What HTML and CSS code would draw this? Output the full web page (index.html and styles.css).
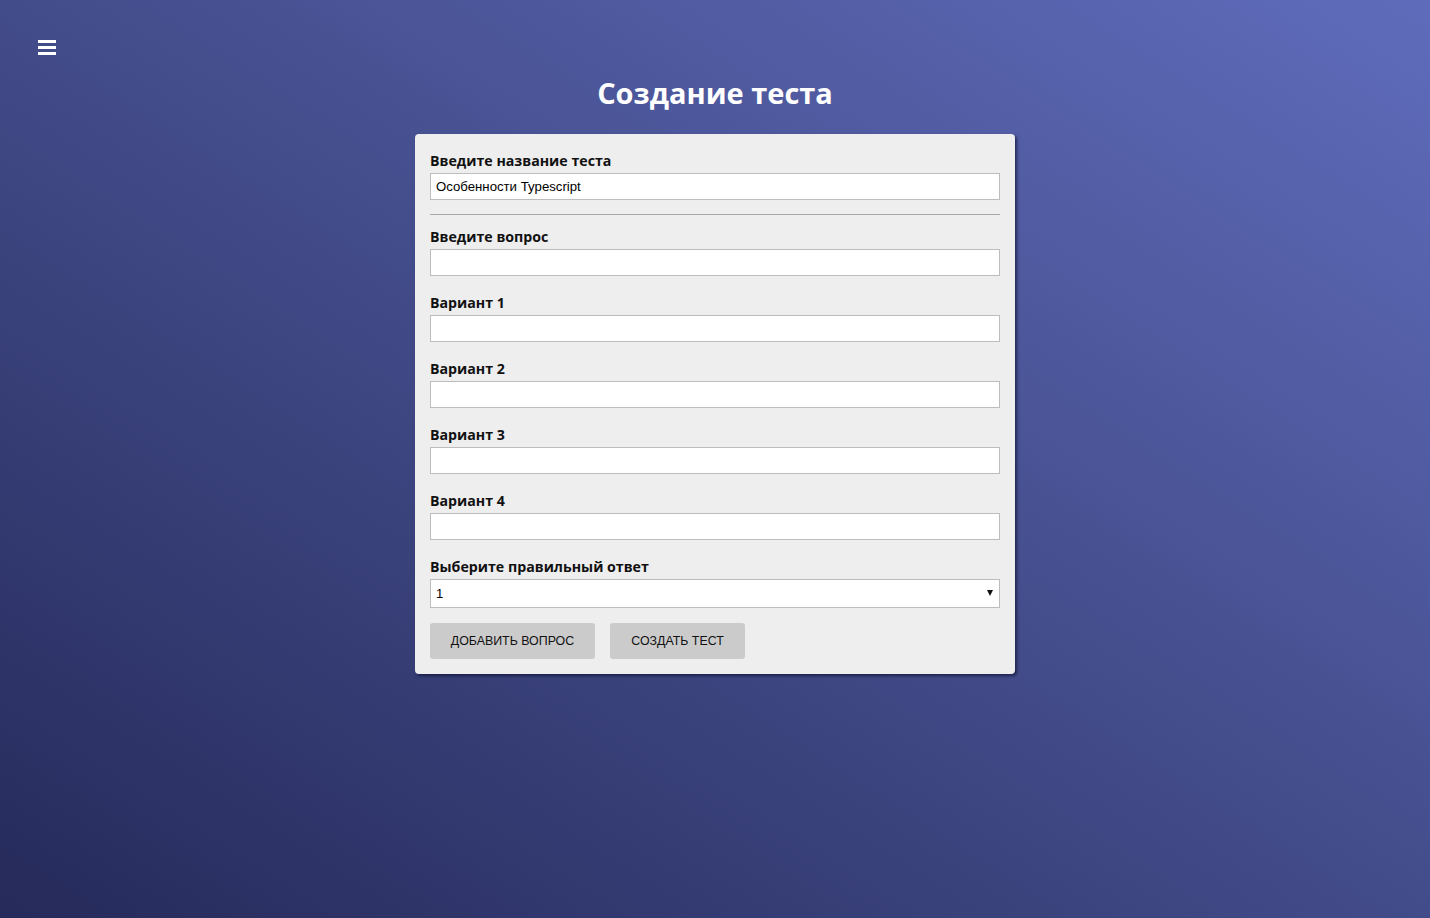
FILE: index.html
```html
<!DOCTYPE html>
<html lang="ru">
<head>
<meta charset="utf-8">
<title>Создание теста</title>
<link rel="stylesheet" href="styles.css">
</head>
<body>
<div class="page">
  <header class="topbar">
    <button class="menu-btn" aria-label="Меню">
      <svg width="18" height="15" viewBox="0 0 18 15"><rect x="0" y="0" width="18" height="3" fill="#fff"/><rect x="0" y="6" width="18" height="3" fill="#fff"/><rect x="0" y="12" width="18" height="3" fill="#fff"/></svg>
    </button>
  </header>
  <h1 class="title">Создание теста</h1>
  <form class="card">
    <div class="group group-first">
      <label class="label">Введите название теста</label>
      <input class="field" type="text" value="Особенности Typescript">
    </div>
    <hr class="divider">
    <div class="group">
      <label class="label">Введите вопрос</label>
      <input class="field" type="text">
    </div>
    <div class="group">
      <label class="label">Вариант 1</label>
      <input class="field" type="text">
    </div>
    <div class="group">
      <label class="label">Вариант 2</label>
      <input class="field" type="text">
    </div>
    <div class="group">
      <label class="label">Вариант 3</label>
      <input class="field" type="text">
    </div>
    <div class="group">
      <label class="label">Вариант 4</label>
      <input class="field" type="text">
    </div>
    <div class="group group-last">
      <label class="label">Выберите правильный ответ</label>
      <div class="select-wrap">
        <select class="select">
          <option>1</option>
          <option>2</option>
          <option>3</option>
          <option>4</option>
        </select>
        <span class="caret"></span>
      </div>
    </div>
    <div class="actions">
      <button type="button" class="btn btn-add">Добавить вопрос</button>
      <button type="button" class="btn btn-create">Создать тест</button>
    </div>
  </form>
</div>
</body>
</html>
```
FILE: styles.css
```css
* { box-sizing: border-box; }
html, body { margin: 0; padding: 0; }
body {
  min-height: 918px;
  background: linear-gradient(to top right, #252a5a 0%, #434c8a 50%, #5f6cbb 100%);
  font-family: "Open Sans", "Liberation Sans", sans-serif;
}
.page {
  min-height: 918px;
  display: flex;
  flex-direction: column;
  align-items: center;
}
.topbar {
  align-self: stretch;
  padding: 40px 0 0 38px;
  height: 55px;
}
.menu-btn {
  display: block;
  padding: 0;
  margin: 0;
  border: 0;
  background: none;
  width: 18px;
  height: 15px;
  cursor: pointer;
}
.menu-btn svg { display: block; }
.title {
  margin: 18px 0 21px;
  height: 40px;
  line-height: 40px;
  font-size: 29px;
  font-weight: 700;
  color: #fff;
  text-align: center;
}
.card {
  width: 600px;
  background: #eeeeee;
  border-radius: 4px;
  box-shadow: 2px 2px 3px rgba(10, 12, 40, 0.6);
  padding: 16px 15px 15px;
}
.group { margin-bottom: 16px; }
.group-first { margin-bottom: 0; }
.group-last { margin-bottom: 15px; }
.label {
  display: block;
  font-size: 14.2px;
  font-weight: 700;
  line-height: 20px;
  height: 20px;
  padding-top: 1px;
  margin-bottom: 3px;
  color: #111;
}
.field {
  display: block;
  width: 100%;
  height: 27px;
  border: 1px solid #bdbdbd;
  background: #fff;
  padding: 0 5px;
  font-family: "Liberation Sans", Arial, sans-serif;
  font-size: 13.2px;
  color: #000;
  outline: none;
}
.divider {
  border: 0;
  border-top: 1px solid #a8a8a8;
  margin: 14px 0 11px;
  height: 0;
}
.select-wrap { position: relative; }
.select {
  display: block;
  width: 100%;
  height: 29px;
  border: 1px solid #bdbdbd;
  background: #fff;
  padding: 0 5px;
  font-family: "Liberation Sans", Arial, sans-serif;
  font-size: 13px;
  color: #000;
  -webkit-appearance: none;
  appearance: none;
  border-radius: 0;
  outline: none;
}
.caret {
  position: absolute;
  right: 7px;
  top: 11px;
  width: 0;
  height: 0;
  border-left: 3.5px solid transparent;
  border-right: 3.5px solid transparent;
  border-top: 6px solid #111;
  pointer-events: none;
}
.actions {
  display: flex;
  gap: 15px;
}
.btn {
  height: 36px;
  border: 0;
  border-radius: 3px;
  background: #cbcbcb;
  color: #111;
  font-family: "Liberation Sans", Arial, sans-serif;
  font-size: 12.4px;
  text-transform: uppercase;
  cursor: pointer;
  padding: 0;
}
.btn-add { width: 165px; }
.btn-create { width: 135px; }
```
